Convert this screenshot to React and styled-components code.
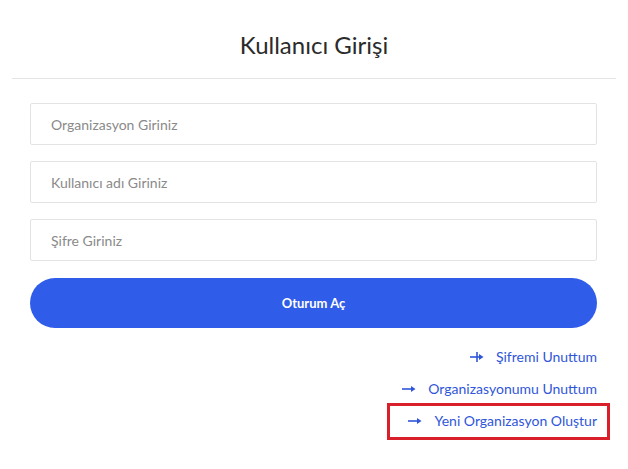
import styled, { createGlobalStyle } from "styled-components";

const GlobalStyle = createGlobalStyle`
  body {
    margin: 0;
    background: #fff;
    font-family: Lato, "Noto Sans", sans-serif;
  }
`;

const Container = styled.div`
  width: 628px;
  min-height: 469px;
  background-color: #fff;
`;

const Header = styled.div`
  margin: 0 12px;
  padding: 30px 0 18px;
  border-bottom: 1px solid #e4e4e4;
  text-align: center;
`;

const Title = styled.h1`
  margin: 0;
  font-size: 24px;
  line-height: 30px;
  font-weight: 400;
  color: #2b2b2b;
`;

const Form = styled.form`
  display: flex;
  flex-direction: column;
  gap: 16px;
  padding: 24px 31px 0 30px;
`;

const Input = styled.input`
  height: 42px;
  box-sizing: border-box;
  padding: 0 20px;
  border: 1px solid #e3e3e3;
  border-radius: 2px;
  font-family: inherit;
  font-size: 14px;
  color: #333;
  outline: none;
  &::placeholder {
    color: #8a8a8a;
  }
`;

const Button = styled.button`
  height: 50px;
  margin-top: 1px;
  border: none;
  border-radius: 25px;
  background-color: #2f5ce9;
  color: #fff;
  font-family: inherit;
  font-size: 13px;
  font-weight: 700;
  cursor: pointer;
`;

const Links = styled.div`
  display: flex;
  flex-direction: column;
  align-items: flex-end;
  gap: 12px;
  padding: 19px 31px 0 30px;
`;

const LinkRow = styled.a`
  position: relative;
  display: flex;
  align-items: center;
  gap: 12px;
  font-size: 14px;
  line-height: 20px;
  color: #2f56d9;
  text-decoration: none;
  cursor: pointer;
  ${(p) =>
    p.$highlight &&
    `
    &::after {
      content: "";
      position: absolute;
      top: -8px;
      bottom: -9px;
      left: -21px;
      right: -13px;
      border: 3px solid #d9202a;
    }
  `}
`;

const Arrow = ({ cross }) => (
  <svg width="14" height="10" viewBox="0 0 14 10">
    <line x1="0" y1="5" x2="10" y2="5" stroke="#2f56d9" strokeWidth="1.6" />
    <path d="M9 2 L13.5 5 L9 8 Z" fill="#2f56d9" />
    {cross && <line x1="7" y1="0" x2="7" y2="10" stroke="#2f56d9" strokeWidth="1.6" />}
  </svg>
);

const App = () => {
  return (
    <Container>
      <GlobalStyle />
      <Header>
        <Title>Kullanıcı Girişi</Title>
      </Header>
      <Form onSubmit={(e) => e.preventDefault()}>
        <Input placeholder="Organizasyon Giriniz" />
        <Input placeholder="Kullanıcı adı Giriniz" />
        <Input placeholder="Şifre Giriniz" type="password" />
        <Button type="submit">Oturum Aç</Button>
      </Form>
      <Links>
        <LinkRow>
          <Arrow cross />
          Şifremi Unuttum
        </LinkRow>
        <LinkRow>
          <Arrow />
          Organizasyonumu Unuttum
        </LinkRow>
        <LinkRow $highlight>
          <Arrow />
          Yeni Organizasyon Oluştur
        </LinkRow>
      </Links>
    </Container>
  );
};

export default App;
